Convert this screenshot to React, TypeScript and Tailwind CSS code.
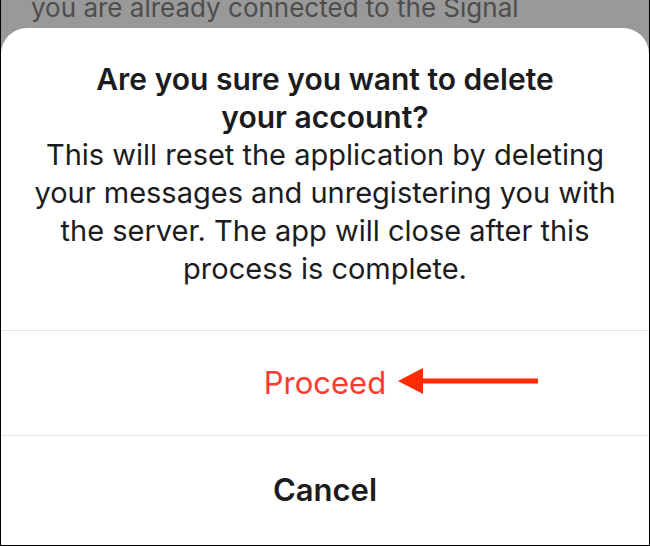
import React from 'react';

const font = { fontFamily: 'Inter, "Liberation Sans", sans-serif' };

function Arrow() {
  return (
    <svg
      className="absolute left-[397px] top-[37px]"
      width="141"
      height="26"
      viewBox="0 0 141 26"
    >
      <polygon points="0,13 25,0 25,26" fill="#ff2a00" />
      <rect x="24" y="10.5" width="116" height="5" fill="#ff2a00" />
    </svg>
  );
}

export default function App() {
  return (
    <div
      className="w-[650px] h-[546px] bg-[#999999] border-x border-b border-black overflow-hidden flex flex-col"
      style={font}
    >
      {/* background screen peeking above the sheet */}
      <div className="h-[28px] overflow-hidden">
        <p className="-mt-[7px] pl-[30px] text-[26px] leading-[30px] text-[#4d4d4d] whitespace-nowrap">
          you are already connected to the Signal
        </p>
      </div>

      {/* action sheet */}
      <div className="flex-1 bg-white rounded-t-[26px] flex flex-col">
        <div className="pt-[32px] pb-[42px] text-center text-[#1c1c1e] text-[29px] leading-[38px] whitespace-nowrap">
          <h2 className="font-semibold text-[30px]">
            Are you sure you want to delete
            <br />
            your account?
          </h2>
          <p>
            This will reset the application by deleting
            <br />
            your messages and unregistering you with
            <br />
            the server. The app will close after this
            <br />
            process is complete.
          </p>
        </div>

        <div className="border-t border-[#e3e3e5] h-[105px] relative flex items-center justify-center">
          <span className="text-[31px] text-[#ff3b30]">Proceed</span>
          <Arrow />
        </div>

        <div className="border-t border-[#e3e3e5] flex-1 flex items-center justify-center">
          <span className="text-[31px] font-semibold text-[#1c1c1e]">Cancel</span>
        </div>
      </div>
    </div>
  );
}
